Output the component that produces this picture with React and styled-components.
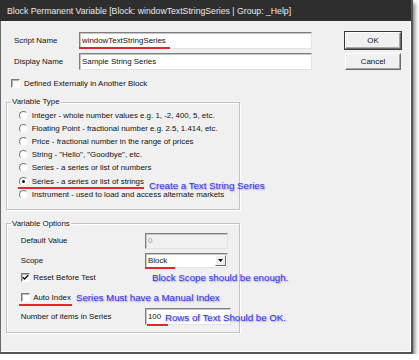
import React from 'react';
import styled, { createGlobalStyle } from 'styled-components';

const GlobalStyle = createGlobalStyle`
    html, body {
        margin: 0;
        background: #fff;
    }
    body {
        font-family: "Liberation Sans", Arial, sans-serif;
        color: #111;
    }
`;

const Window = styled.div`
    box-sizing: border-box;
    width: 413px;
    height: 354px;
    background: #f0f0f0;
    border-left: 1px solid #6a6a6a;
    border-right: 2px solid #555;
    border-bottom: 2px solid #555;
    box-shadow: inset -1px -1px 0 #fff, 2px 3px 4px rgba(0, 0, 0, 0.5);
    display: flex;
    flex-direction: column;
`;

const TitleBar = styled.div`
    flex: none;
    height: 21px;
    margin-left: -1px;
    padding-left: 7px;
    background: #2e2e2e;
    color: #ececec;
    font-size: 8.7px;
    line-height: 22px;
    white-space: nowrap;
`;

const Body = styled.div`
    display: flex;
    align-items: flex-start;
    padding: 11px 0 0 5px;
    font-size: 7.9px;
`;

const Main = styled.div`
    width: 306px;
    display: flex;
    flex-direction: column;
`;

const FieldRow = styled.div`
    display: grid;
    grid-template-columns: 65px 233px;
    align-items: center;
    height: 17px;
    padding-left: 8px;
    margin-top: ${(p) => p.$mt || 0}px;
`;

const TextBox = styled.div`
    position: relative;
    box-sizing: border-box;
    width: ${(p) => (p.$w ? `${p.$w}px` : '100%')};
    height: ${(p) => p.$h || 17}px;
    padding-left: 2px;
    background: ${(p) => (p.$disabled ? '#f0f0f0' : '#fff')};
    color: ${(p) => (p.$disabled ? '#9a9a9a' : '#111')};
    border: 1px solid;
    border-color: #7f7f7f #e3e3e3 #e3e3e3 #7f7f7f;
    box-shadow: inset 1px 1px 0 #c6c6c6;
    display: flex;
    align-items: center;
    white-space: nowrap;
`;

const Underlined = styled.span`
    position: relative;
    display: inline-flex;
    align-items: center;
    &::after {
        content: '';
        position: absolute;
        left: -${(p) => p.$l || 0}px;
        right: -${(p) => p.$r || 0}px;
        bottom: ${(p) => p.$b || 0}px;
        height: 2px;
        background: #e3262b;
    }
`;

const CheckRow = styled.label`
    display: flex;
    align-items: center;
    height: 10px;
    padding-left: ${(p) => p.$pl || 0}px;
    margin-top: ${(p) => p.$mt || 0}px;
    white-space: nowrap;
`;

const Box = styled.span`
    box-sizing: border-box;
    flex: none;
    width: 9px;
    height: 9px;
    margin-right: ${(p) => p.$gap || 4}px;
    background: #fff;
    border: 1px solid;
    border-color: #7a7a7a #fdfdfd #fdfdfd #7a7a7a;
    box-shadow: inset 1px 1px 0 #b5b5b5;
    display: flex;
    align-items: center;
    justify-content: center;
`;

const Group = styled.fieldset`
    box-sizing: border-box;
    width: 234px;
    min-width: 0;
    margin: ${(p) => p.$mt}px 0 0 0;
    padding: ${(p) => p.$pt}px 0 ${(p) => p.$pb}px 0;
    border: 1px solid #c2c2c2;
    box-shadow: inset 1px 1px 0 #fff, 1px 1px 0 #fff;
`;

const Legend = styled.legend`
    margin-left: 4px;
    padding: 0 1px;
    font-size: 7.9px;
    line-height: 10px;
`;

const RadioRow = styled.div`
    display: flex;
    align-items: center;
    height: 13.2px;
    padding-left: 12px;
    white-space: nowrap;
`;

const Radio = styled.span`
    box-sizing: border-box;
    flex: none;
    position: relative;
    width: 9px;
    height: 9px;
    margin-right: 3.7px;
    border-radius: 50%;
    background: #fff;
    border: 1px solid;
    border-color: #7a7a7a #f4f4f4 #f4f4f4 #7a7a7a;
    &::after {
        content: '';
        display: ${(p) => (p.$checked ? 'block' : 'none')};
        position: absolute;
        left: 2px;
        top: 2px;
        width: 3px;
        height: 3px;
        border-radius: 50%;
        background: #111;
    }
`;

const Note = styled.span`
    font-family: "Liberation Sans", Arial, sans-serif;
    font-size: 9.7px;
    color: #2f2fff;
    text-shadow: 1px 1px 1.5px rgba(0, 0, 0, 0.35);
    white-space: nowrap;
    margin-left: ${(p) => p.$ml || 0}px;
    transform: translateY(${(p) => p.$dy || 0}px);
`;

const FloatingNote = styled(Note)`
    position: absolute;
    left: ${(p) => p.$left}px;
    top: 50%;
    transform: translateY(-50%);
`;

const OptionRow = styled.div`
    display: grid;
    grid-template-columns: 124.3px 1fr;
    align-items: center;
    height: ${(p) => p.$h || 16}px;
    padding-left: 13.7px;
    margin-top: ${(p) => p.$mt || 0}px;
    white-space: nowrap;
`;

const Cell = styled.div`
    position: relative;
    display: flex;
    align-items: center;
`;

const Combo = styled(TextBox)`
    justify-content: space-between;
    padding-right: 1px;
`;

const DropButton = styled.span`
    box-sizing: border-box;
    width: 11px;
    height: 11px;
    background: #f0f0f0;
    border: 1px solid;
    border-color: #fff #6a6a6a #6a6a6a #fff;
    display: flex;
    align-items: center;
    justify-content: center;
`;

const ButtonCol = styled.div`
    width: 56px;
    margin-left: 33px;
    display: flex;
    flex-direction: column;
    gap: 4px;
`;

const Button = styled.button`
    box-sizing: border-box;
    height: 17px;
    padding: 0;
    background: #f0f0f0;
    font-family: "Liberation Sans", Arial, sans-serif;
    font-size: 7.9px;
    color: #111;
    border: 1px solid;
    border-color: #fff #6a6a6a #6a6a6a #fff;
    box-shadow: inset -1px -1px 0 #a8a8a8;
    outline: ${(p) => (p.$default ? '1px solid #3a3a3a' : 'none')};
`;

const Check = () => (
    <svg width="7" height="7" viewBox="0 0 7 7">
        <path d="M0.8 3.2 L2.6 5 L6.2 1.2" fill="none" stroke="#111" strokeWidth="1.5" />
    </svg>
);

const Arrow = () => (
    <svg width="5" height="3" viewBox="0 0 5 3">
        <path d="M0 0 H5 L2.5 3 Z" fill="#111" />
    </svg>
);

const variableTypes = [
    'Integer - whole number values e.g. 1, -2, 400, 5, etc.',
    'Floating Point - fractional number e.g. 2.5, 1.414, etc.',
    'Price - fractional number in the range of prices',
    'String - "Hello", "Goodbye", etc.',
    'Series - a series or list of numbers',
    'Series - a series or list of strings',
    'Instrument - used to load and access alternate markets',
];

const App = () => (
    <>
        <GlobalStyle />
        <Window>
            <TitleBar>Block Permanent Variable [Block: windowTextStringSeries | Group: _Help]</TitleBar>
            <Body>
                <Main>
                    <FieldRow>
                        <span>Script Name</span>
                        <TextBox>
                            <Underlined $l={3} $r={4} $b={-4}>windowTextStringSeries</Underlined>
                        </TextBox>
                    </FieldRow>
                    <FieldRow $mt={4}>
                        <span>Display Name</span>
                        <TextBox>Sample String Series</TextBox>
                    </FieldRow>
                    <CheckRow $pl={5} $mt={8}>
                        <Box $gap={4} />
                        Defined Externally in Another Block
                    </CheckRow>

                    <Group $mt={9} $pt={1.5} $pb={8}>
                        <Legend>Variable Type</Legend>
                        {variableTypes.map((t, i) =>
                            i === 5 ? (
                                <RadioRow key={t}>
                                    <Underlined $l={1} $r={0} $b={-3}>
                                        <Radio $checked />
                                        {t}
                                    </Underlined>
                                    <Note $ml={5} $dy={4}>Create a Text String Series</Note>
                                </RadioRow>
                            ) : (
                                <RadioRow key={t}>
                                    <Radio />
                                    {t}
                                </RadioRow>
                            )
                        )}
                    </Group>

                    <Group $mt={9} $pt={4} $pb={6.5}>
                        <Legend>Variable Options</Legend>
                        <OptionRow>
                            <span>Default Value</span>
                            <Cell>
                                <TextBox $w={83} $h={16} $disabled>0</TextBox>
                            </Cell>
                        </OptionRow>
                        <OptionRow $mt={4}>
                            <span>Scope</span>
                            <Cell>
                                <Combo $w={83} $h={15}>
                                    <Underlined $l={3} $r={8} $b={-4}>Block</Underlined>
                                    <DropButton>
                                        <Arrow />
                                    </DropButton>
                                </Combo>
                            </Cell>
                        </OptionRow>
                        <OptionRow $mt={1}>
                            <CheckRow>
                                <Box $gap={3.5}>
                                    <Check />
                                </Box>
                                Reset Before Test
                            </CheckRow>
                            <Cell>
                                <Note $ml={7}>Block Scope should be enough.</Note>
                            </Cell>
                        </OptionRow>
                        <OptionRow $mt={3.5}>
                            <CheckRow>
                                <Underlined $l={2} $r={1} $b={-4}>
                                    <Box $gap={3.5} />
                                    Auto Index
                                </Underlined>
                                <Note $ml={5}>Series Must have a Manual Index</Note>
                            </CheckRow>
                        </OptionRow>
                        <OptionRow $mt={3} $h={17}>
                            <span>Number of items in Series</span>
                            <Cell>
                                <TextBox $w={86}>
                                    <Underlined $l={1} $r={7} $b={-5}>100</Underlined>
                                </TextBox>
                                <FloatingNote $left={20}>Rows of Text Should be OK.</FloatingNote>
                            </Cell>
                        </OptionRow>
                    </Group>
                </Main>
                <ButtonCol>
                    <Button $default>OK</Button>
                    <Button>Cancel</Button>
                </ButtonCol>
            </Body>
        </Window>
    </>
);

export default App;
